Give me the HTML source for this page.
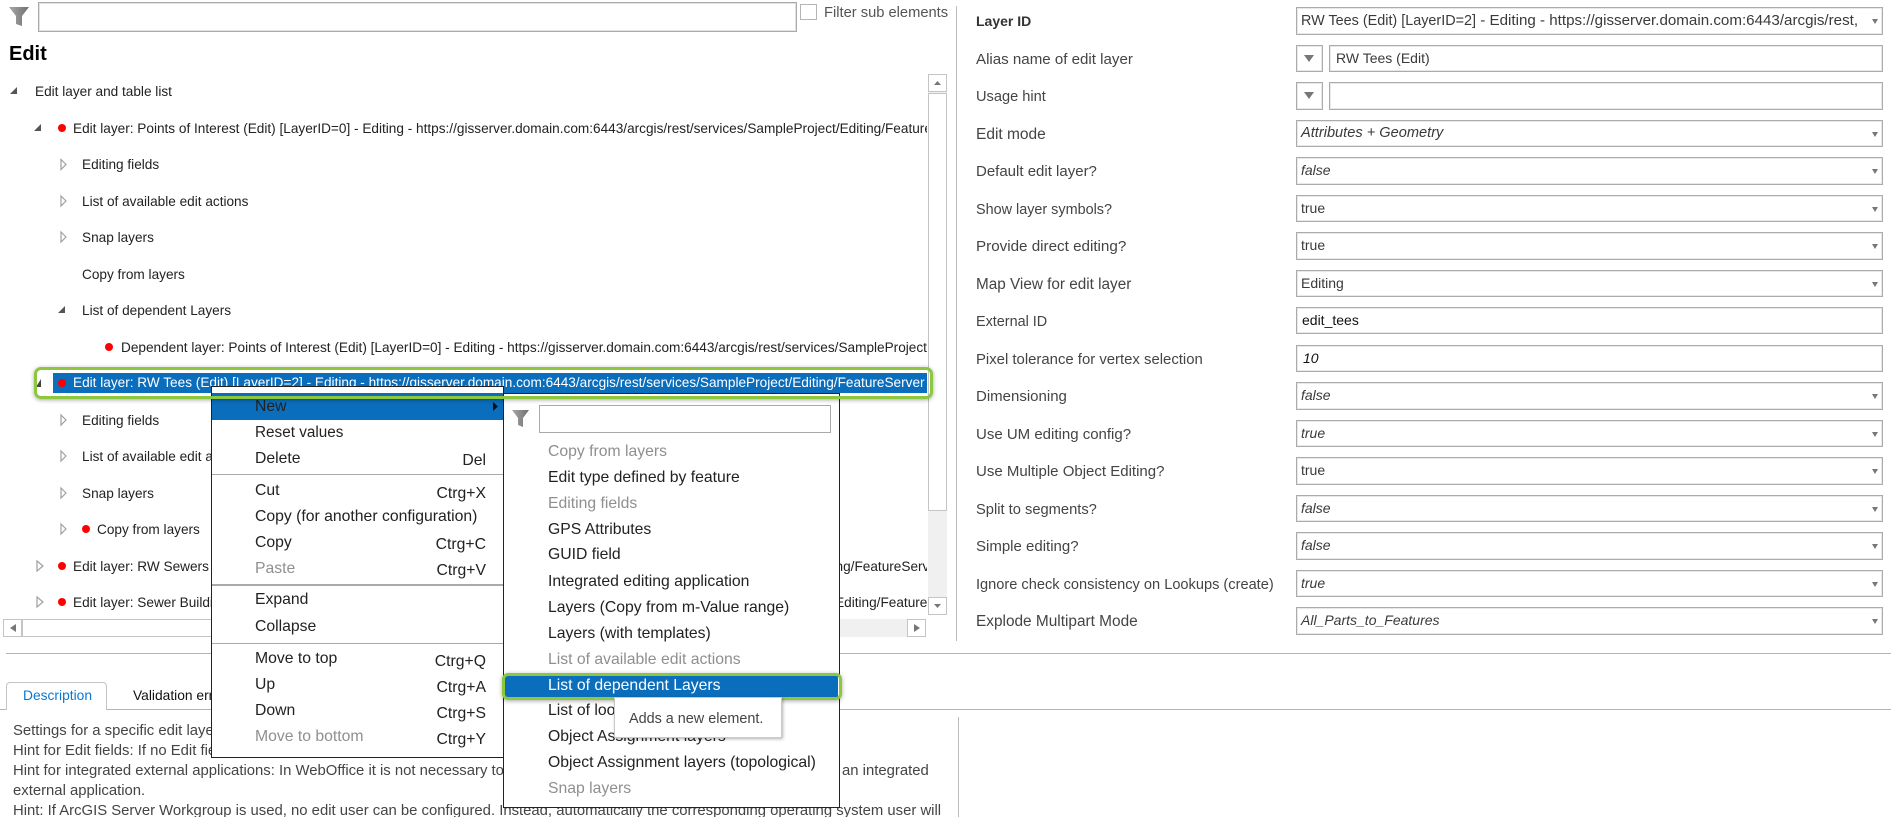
<!DOCTYPE html>
<html lang="en"><head><meta charset="utf-8"><title>Edit</title>
<style>
html,body{margin:0;padding:0;background:#fff;width:1891px;height:817px;overflow:hidden}
body{position:relative;font-family:"Liberation Sans",sans-serif;color:#333}
div,span{box-sizing:border-box}
.a{position:absolute}
.t{position:absolute;white-space:nowrap;line-height:20px;height:20px;font-size:13.5px;color:#222}
.tr .t{font-size:13.62px;margin-top:1px}
.d{position:absolute;width:8px;height:8px;border-radius:50%;background:#f00;margin-top:1px}
.l{position:absolute;left:976px;white-space:nowrap;line-height:20px;font-size:15px;color:#444}
.f{position:absolute;left:1296px;width:587px;border:1px solid #ababab;box-shadow:inset 0 0 0 1px #e8e8e8;background:#fff;font-size:14px;line-height:24px;padding-left:4px;color:#3a3a3a;white-space:nowrap;overflow:hidden}
.f:after{content:"";position:absolute;right:4px;top:11px;border-left:3px solid transparent;border-right:3px solid transparent;border-top:5px solid #777}
.n:after{display:none}
.i{font-style:italic}
.b{position:absolute;left:1296px;width:27px;border:1px solid #ababab;box-shadow:inset 0 0 0 1px #e8e8e8;background:#fff}
.b:after{content:"";position:absolute;left:7px;top:9px;border-left:5.5px solid transparent;border-right:5.5px solid transparent;border-top:7px solid #777}
.m{position:absolute;white-space:nowrap;line-height:22px;font-size:15.75px;color:#222;margin-top:1px}
.g{color:#8f8f8f}
.s{position:absolute;white-space:nowrap;line-height:22px;font-size:15.75px;color:#222;text-align:right;right:1405px;margin-top:1px}
.p{position:absolute;white-space:nowrap;line-height:20px;left:13px;font-size:14.87px;color:#444;margin-top:1px}
.sb{position:absolute;border:1px solid #c4c4c4;background:#fff}
svg{position:absolute;overflow:visible}
</style></head><body>

<svg style="left:0;top:0" width="40" height="40"><defs><linearGradient id="fg" x1="0" x2="1" y1="0" y2="0"><stop offset="0" stop-color="#a8a8a8"/><stop offset="1" stop-color="#6f6f6f"/></linearGradient></defs><path d="M9 7H29L22 16V26L16 24V16Z" fill="url(#fg)"/></svg>
<div class="a" style="left:38px;top:2px;width:759px;height:30px;border:1px solid #aaa;box-shadow:inset 0 0 0 1px #e2e2e2"></div>
<div class="a" style="left:800px;top:4px;width:17px;height:16px;border:1px solid #b5b5b5"></div>
<div class="t" style="left:824px;top:3px;font-size:14.7px;color:#555">Filter sub elements</div>
<div class="a" style="left:956px;top:6px;width:1px;height:635px;background:#bdbdbd"></div>
<div class="t" style="left:9px;top:44px;font-size:20px;font-weight:bold;color:#000">Edit</div>

<div class="a tr" style="left:0;top:70px;width:927px;height:546px;overflow:hidden">
 <div style="position:absolute;left:0;top:-70px;width:927px;height:700px">
  <svg style="left:0;top:0" width="100" height="640">
   <path d="M10 94L17 87V94Z" fill="#555"/>
   <path d="M34 131L41 124V131Z" fill="#555"/>
   <path d="M58 313L65 306V313Z" fill="#555"/>
   <path d="M36 387L41 379V387Z" fill="#444"/>
   <g fill="#fff" stroke="#a0a0a0" stroke-width="1.2">
    <path d="M61 159.5L66 164.5L61 169.5Z"/><path d="M61 196L66 201L61 206Z"/><path d="M61 232L66 237L61 242Z"/>
    <path d="M61 415L66 420L61 425Z"/><path d="M61 451L66 456L61 461Z"/><path d="M61 488L66 493L61 498Z"/><path d="M61 524L66 529L61 534Z"/>
    <path d="M37 561L43 566L37 571Z"/><path d="M37 597L43 602L37 607Z"/>
   </g>
  </svg>
  <div class="t" style="left:35px;top:81px">Edit layer and table list</div>
  <div class="d" style="left:58px;top:123px"></div>
  <div class="t" style="left:73px;top:118px">Edit layer: Points of Interest (Edit) [LayerID=0] - Editing - https://gisserver.domain.com:6443/arcgis/rest/services/SampleProject/Editing/FeatureServer</div>
  <div class="t" style="left:82px;top:154px">Editing fields</div>
  <div class="t" style="left:82px;top:191px">List of available edit actions</div>
  <div class="t" style="left:82px;top:227px">Snap layers</div>
  <div class="t" style="left:82px;top:264px">Copy from layers</div>
  <div class="t" style="left:82px;top:300px">List of dependent Layers</div>
  <div class="d" style="left:105px;top:342px"></div>
  <div class="t" style="left:121px;top:337px">Dependent layer: Points of Interest (Edit) [LayerID=0] - Editing - https://gisserver.domain.com:6443/arcgis/rest/services/SampleProject/Editing</div>
  <div class="a" style="left:53px;top:373px;width:874px;height:20px;background:#0a6ebd"></div>
  <div class="d" style="left:58px;top:378px"></div>
  <div class="t" style="left:73px;top:372px;color:#fff">Edit layer: RW Tees (Edit) [LayerID=2] - Editing - https://gisserver.domain.com:6443/arcgis/rest/services/SampleProject/Editing/FeatureServer</div>
  <div class="t" style="left:82px;top:410px">Editing fields</div>
  <div class="t" style="left:82px;top:446px">List of available edit actions</div>
  <div class="t" style="left:82px;top:483px">Snap layers</div>
  <div class="d" style="left:82px;top:524px"></div>
  <div class="t" style="left:97px;top:519px">Copy from layers</div>
  <div class="d" style="left:58px;top:561px"></div>
  <div class="t" style="left:73px;top:556px">Edit layer: RW Sewers (Edit) [LayerID=1] - Editing - https://gisserver.domain.com:6443/arcgis/rest/services/SampleProject/Editing/FeatureServer</div>
  <div class="d" style="left:58px;top:597px"></div>
  <div class="t" style="left:73px;top:592px">Edit layer: Sewer Buildings (Edit) [LayerID=3] - Editing - https://gisserver.domain.com:6443/arcgis/rest/services/SampleProject/Editing/FeatureServer</div>
 </div>
</div>

<!-- vertical scrollbar -->
<div class="a" style="left:928px;top:74px;width:19px;height:541px;background:#f0f0f0"></div>
<div class="sb" style="left:928px;top:74px;width:19px;height:18px"></div>
<div class="sb" style="left:928px;top:93px;width:19px;height:418px"></div>
<div class="sb" style="left:928px;top:597px;width:19px;height:18px"></div>
<svg style="left:0;top:0" width="1" height="1"><path d="M934 85L937.500 81L941 85Z" fill="#777"/><path d="M934 604H941L937.500 608Z" fill="#777"/></svg>
<!-- horizontal scrollbar -->
<div class="a" style="left:3px;top:619px;width:923px;height:18px;background:#f0f0f0"></div>
<div class="sb" style="left:3px;top:619px;width:19px;height:18px"></div>
<div class="sb" style="left:22px;top:619px;width:600px;height:18px"></div>
<div class="sb" style="left:907px;top:619px;width:19px;height:18px"></div>
<svg style="left:0;top:0" width="1" height="1"><path d="M16 624V632L10 628Z" fill="#777"/><path d="M914 624V632L920 628Z" fill="#777"/></svg>

<!-- separators / tabs -->
<div class="a" style="left:6px;top:653px;width:1885px;height:1px;background:#b4b4b4"></div>
<div class="a" style="left:0;top:709px;width:1891px;height:1px;background:#b4b4b4"></div>
<div class="a" style="left:6px;top:682px;width:101px;height:28px;border:1px solid #c4c4c4;border-bottom:0;border-radius:4px 4px 0 0;background:#fff"></div>
<div class="t" style="left:23px;top:686px;font-size:13.8px;color:#0a78d0">Description</div>
<div class="t" style="left:133px;top:686px;font-size:13.8px;color:#111">Validation errors</div>
<div class="a" style="left:958px;top:717px;width:1px;height:100px;background:#bdbdbd"></div>
<div class="p" style="top:720px">Settings for a specific edit layer.</div>
<div class="p" style="top:740px">Hint for Edit fields: If no Edit fields are configured, all fields are used.</div>
<div class="p" style="top:760px">Hint for integrated external applications: In WebOffice it is not necessary to configure anything for the use of <span style="position:absolute;left:829px;top:0">an integrated</span></div>
<div class="p" style="top:780px">external application.</div>
<div class="p" style="top:800px">Hint: If ArcGIS Server Workgroup is used, no edit user can be configured. Instead, automatically the corresponding operating system user will</div>

<!-- right panel -->
<div class="l" style="top:11px;font-size:14px;font-weight:bold;color:#333">Layer ID</div>
<div class="f" style="top:7px;height:28px"><span style="display:block;width:562px;overflow:hidden"><span style="font-size:14.4px">RW Tees (Edit) [LayerID=2]</span><span style="font-size:15.15px"> - Editing - https://gisserver.domain.com:6443/arcgis/rest,</span></span></div>
<div class="l" style="top:50px;font-size:15.1px">Alias name of edit layer</div>
<div class="b" style="top:45px;height:27px"></div>
<div class="f n" style="left:1329px;width:554px;top:45px;height:27px;padding-left:6px">RW Tees (Edit)</div>
<div class="l" style="top:87px;font-size:14.6px">Usage hint</div>
<div class="b" style="top:82px;height:28px"></div>
<div class="f n" style="left:1329px;width:554px;top:82px;height:28px"></div>
<div class="l" style="top:125px;font-size:15.5px">Edit mode</div><div class="f i" style="top:120px;height:27px;font-size:14.6px">Attributes + Geometry</div>
<div class="l" style="top:162px">Default edit layer?</div><div class="f i" style="top:157px;height:28px">false</div>
<div class="l" style="top:200px;font-size:14.4px">Show layer symbols?</div><div class="f" style="top:195px;height:27px">true</div>
<div class="l" style="top:237px;font-size:15.2px">Provide direct editing?</div><div class="f" style="top:232px;height:28px">true</div>
<div class="l" style="top:275px;font-size:15.3px">Map View for edit layer</div><div class="f" style="top:270px;height:27px">Editing</div>
<div class="l" style="top:312px;font-size:14.4px">External ID</div><div class="f n" style="top:307px;height:27px;color:#111;padding-left:5px">edit_tees</div>
<div class="l" style="top:350px;font-size:14.9px">Pixel tolerance for vertex selection</div><div class="f n i" style="top:345px;height:27px;color:#111;padding-left:6px">10</div>
<div class="l" style="top:387px">Dimensioning</div><div class="f i" style="top:382px;height:28px">false</div>
<div class="l" style="top:425px">Use UM editing config?</div><div class="f i" style="top:420px;height:27px">true</div>
<div class="l" style="top:462px">Use Multiple Object Editing?</div><div class="f" style="top:457px;height:28px">true</div>
<div class="l" style="top:500px;font-size:14.7px">Split to segments?</div><div class="f i" style="top:495px;height:27px">false</div>
<div class="l" style="top:537px">Simple editing?</div><div class="f i" style="top:532px;height:28px">false</div>
<div class="l" style="top:575px;font-size:14.6px">Ignore check consistency on Lookups (create)</div><div class="f i" style="top:570px;height:27px">true</div>
<div class="l" style="top:612px;font-size:15.4px">Explode Multipart Mode</div><div class="f i" style="top:607px;height:28px">All_Parts_to_Features</div>

<!-- context menu -->
<div class="a" style="left:211px;top:386px;width:293px;height:372px;background:#fff;border:1px solid #222"></div>
<div class="a" style="left:212px;top:393px;width:291px;height:27px;background:#0a6ebd"></div>
<svg style="left:0;top:0" width="1" height="1"><path d="M493 402L498 406.500L493 411Z" fill="#111"/></svg>
<div class="m" style="left:255px;top:395px">New</div>
<div class="m" style="left:255px;top:421px;font-size:15.3px">Reset values</div>
<div class="m" style="left:255px;top:447px">Delete</div><div class="s" style="top:449px">Del</div>
<div class="a" style="left:212px;top:474px;width:291px;height:1px;background:#aaa"></div>
<div class="m" style="left:255px;top:479px">Cut</div><div class="s" style="top:482px">Ctrg+X</div>
<div class="m" style="left:255px;top:505px">Copy (for another configuration)</div>
<div class="m" style="left:255px;top:531px">Copy</div><div class="s" style="top:533px">Ctrg+C</div>
<div class="m g" style="left:255px;top:557px">Paste</div><div class="s g" style="top:559px">Ctrg+V</div>
<div class="a" style="left:212px;top:584px;width:291px;height:2px;background:#aaa"></div>
<div class="m" style="left:255px;top:588px">Expand</div>
<div class="m" style="left:255px;top:615px">Collapse</div>
<div class="a" style="left:212px;top:643px;width:291px;height:1px;background:#aaa"></div>
<div class="m" style="left:255px;top:647px">Move to top</div><div class="s" style="top:650px">Ctrg+Q</div>
<div class="m" style="left:255px;top:673px">Up</div><div class="s" style="top:676px">Ctrg+A</div>
<div class="m" style="left:255px;top:699px">Down</div><div class="s" style="top:702px">Ctrg+S</div>
<div class="m g" style="left:255px;top:725px">Move to bottom</div><div class="s g" style="top:728px">Ctrg+Y</div>

<!-- submenu -->
<div class="a" style="left:503px;top:393px;width:337px;height:415px;background:#fff;border:1px solid #222"></div>
<svg style="left:0;top:0" width="1" height="1"><path d="M512 410H529L523 418V427L518 425V418Z" fill="url(#fg)"/></svg>
<div class="a" style="left:539px;top:405px;width:292px;height:28px;border:1px solid #aaa"></div>
<div class="m g" style="left:548px;top:440px">Copy from layers</div>
<div class="m" style="left:548px;top:466px">Edit type defined by feature</div>
<div class="m g" style="left:548px;top:492px">Editing fields</div>
<div class="m" style="left:548px;top:518px">GPS Attributes</div>
<div class="m" style="left:548px;top:543px">GUID field</div>
<div class="m" style="left:548px;top:570px">Integrated editing application</div>
<div class="m" style="left:548px;top:596px">Layers (Copy from m-Value range)</div>
<div class="m" style="left:548px;top:622px">Layers (with templates)</div>
<div class="m g" style="left:548px;top:648px">List of available edit actions</div>
<div class="a" style="left:505px;top:676px;width:333px;height:22px;background:#0a6ebd"></div>
<div class="m" style="left:548px;top:674px;color:#fff">List of dependent Layers</div>
<div class="m" style="left:548px;top:699px">List of lookup layers</div>
<div class="m" style="left:548px;top:725px">Object Assignment layers</div>
<div class="m" style="left:548px;top:751px">Object Assignment layers (topological)</div>
<div class="m g" style="left:548px;top:777px">Snap layers</div>

<!-- green highlights -->
<div class="a" style="left:34px;top:367px;width:899px;height:32px;border:3.500px solid #8dc63f;border-radius:7px;box-shadow:0 1px 4px rgba(0,0,0,.35)"></div>
<div class="a" style="left:502px;top:673px;width:340px;height:27px;border:3px solid #8dc63f;border-radius:6px;box-shadow:0 1px 4px rgba(0,0,0,.35)"></div>

<!-- tooltip -->
<div class="a" style="left:614px;top:697px;width:168px;height:41px;background:#fff;border:1px solid #c8c8c8;box-shadow:1px 1px 3px rgba(0,0,0,.3)"></div>
<div class="t" style="left:629px;top:709px;font-size:14.4px;color:#444">Adds a new element.</div>
</body></html>
